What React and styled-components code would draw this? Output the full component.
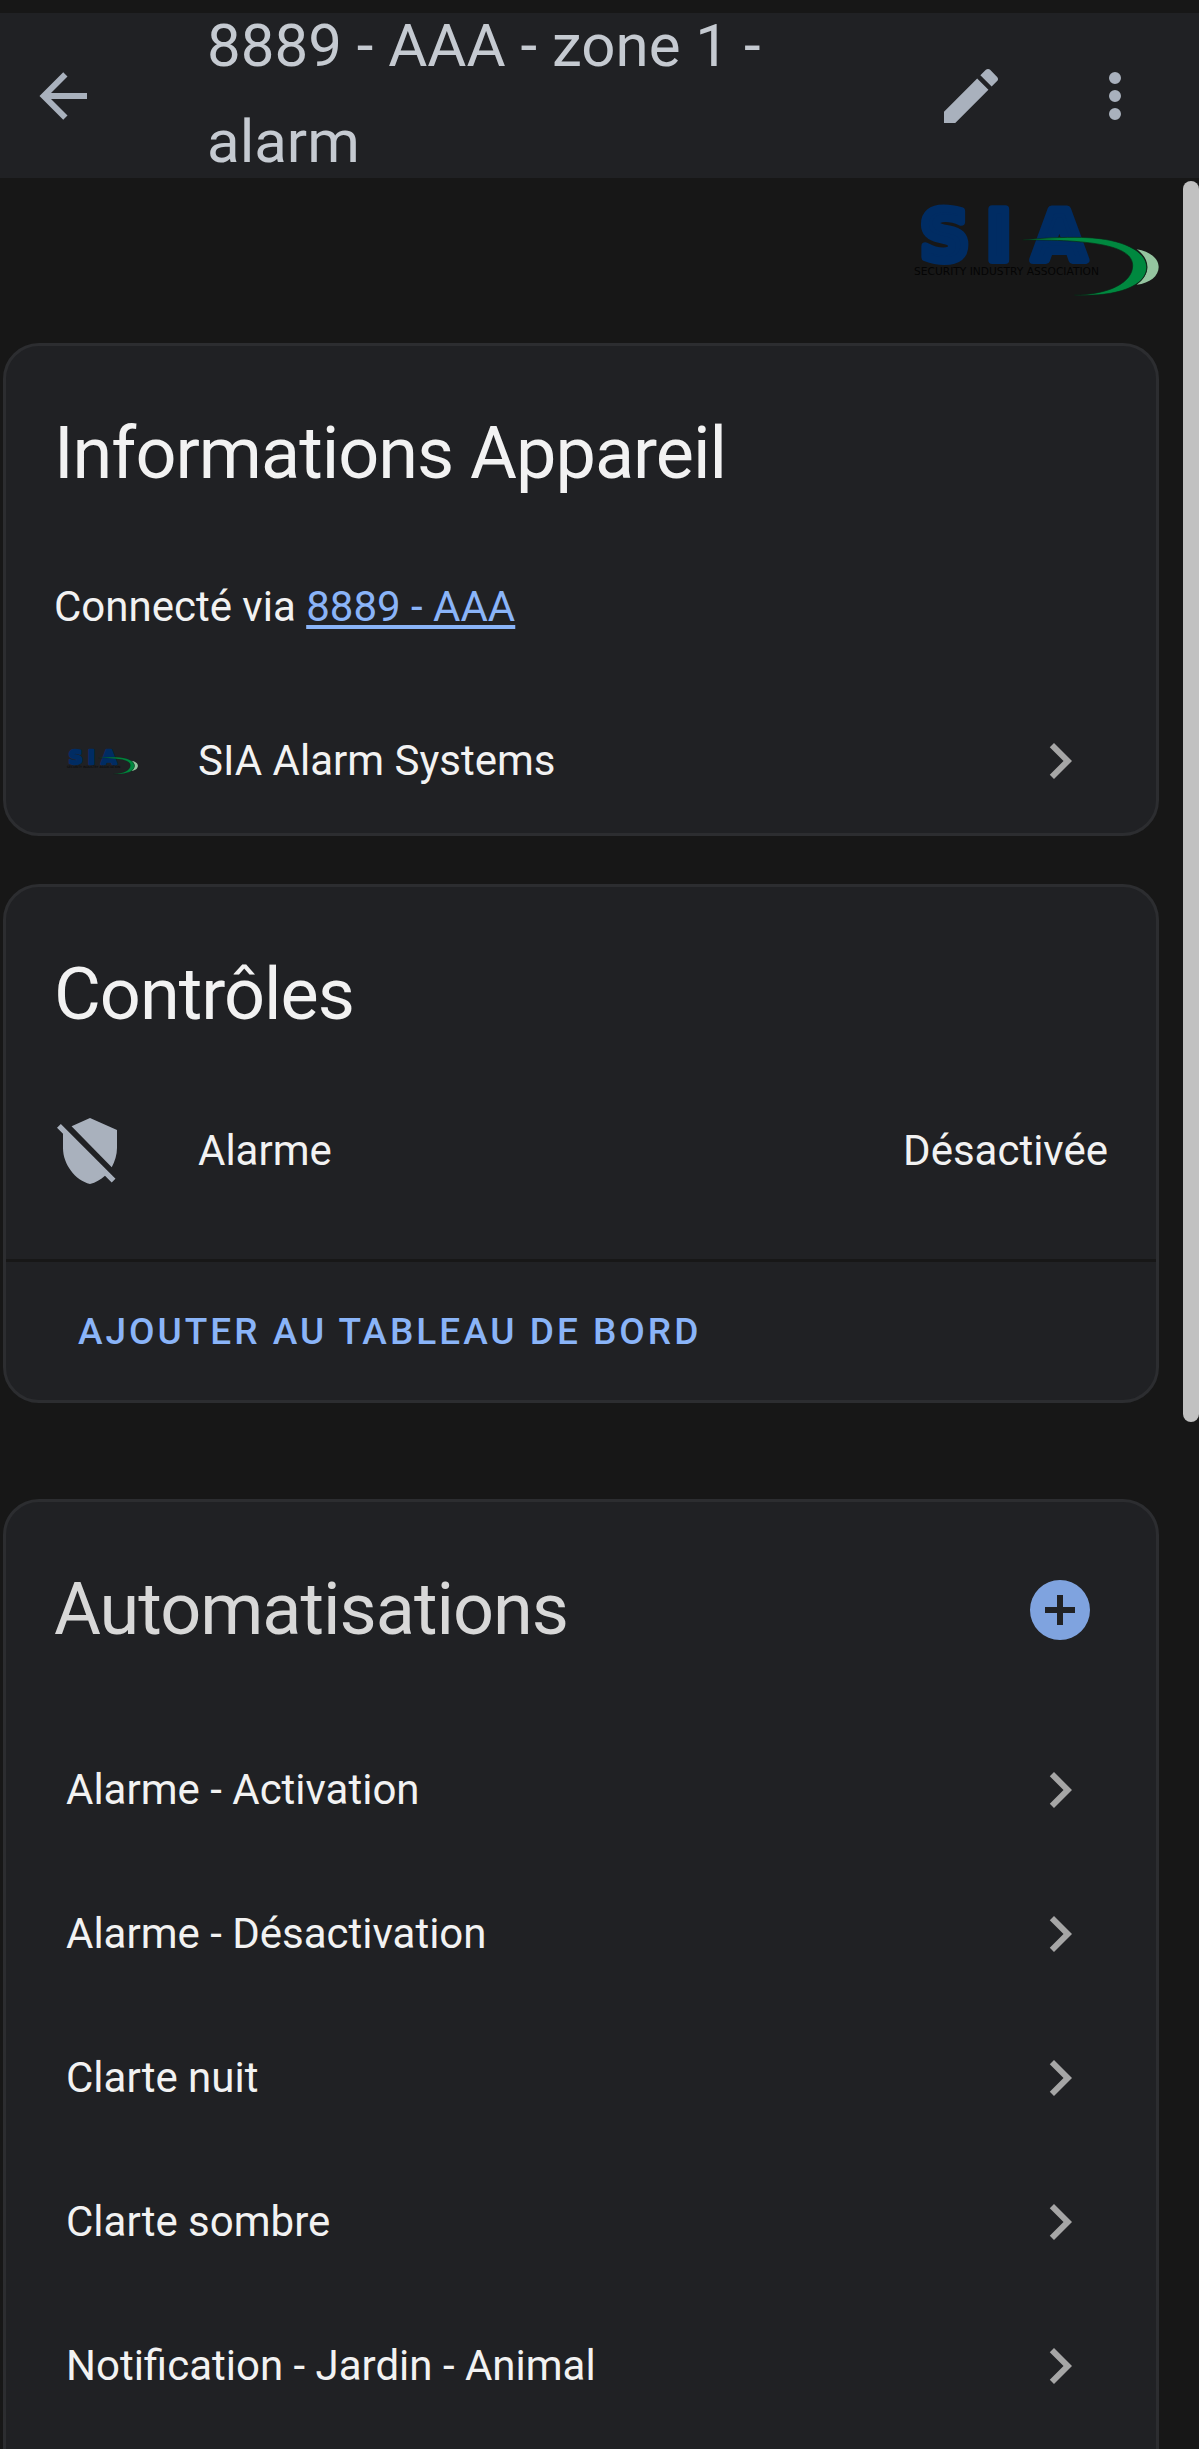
import React from 'react';
import styled, { createGlobalStyle } from 'styled-components';

const GlobalStyle = createGlobalStyle`
  * {
    box-sizing: border-box;
  }
  body {
    margin: 0;
    background-color: #171717;
    color: #f2f2f2;
    font-family: Roboto, 'Liberation Sans', sans-serif;
    font-size: 42px;
    line-height: 66px;
  }
`;

const Page = styled.div`
  display: flex;
  flex-direction: column;
  height: 100vh;
  padding-top: 13px;
  overflow: hidden;
`;
const Toolbar = styled.header`
  display: flex;
  flex: none;
  align-items: center;
  height: 165px;
  padding-right: 12px;
  background-color: #202124;
`;
const Title = styled.div`
  flex: 1;
  margin: 0 84px 0 81px;
  padding-bottom: 4px;
  color: #c5cad1;
  font-size: 60px;
  line-height: 96px;
`;
const IconButton = styled.button`
  display: flex;
  flex: none;
  align-items: center;
  justify-content: center;
  width: ${props => (props.$narrow ? '126px' : '144px')};
  height: 144px;
  padding: 0;
  border: 0;
  background-color: transparent;
  color: ${props => props.$color || '#a9b1bd'};
  cursor: pointer;
`;
const Icon = styled.svg`
  display: block;
  flex: none;
  width: 72px;
  height: 72px;
  fill: currentColor;
`;

const Body = styled.div`
  display: flex;
  flex: 1;
  min-height: 0;
`;
const Content = styled.main`
  flex: 1;
  min-width: 0;
  padding: 0 24px 0 3px;
`;
const Track = styled.div`
  width: 16px;
  padding: 3px 0;
`;
const Thumb = styled.div`
  height: 54.8%;
  border-radius: 8px;
  background-color: #c1c1c1;
`;

const Brand = styled.div`
  display: flex;
  align-items: center;
  justify-content: flex-end;
  height: 165px;
  padding-bottom: 21px;
`;
const Logo = styled.svg`
  display: block;
  flex: none;
  width: ${props => (props.$small ? '72px' : '248px')};
  height: ${props => (props.$small ? '28px' : '91px')};
  overflow: visible;
`;

const Card = styled.section`
  margin-bottom: ${props => (props.$last ? '96px' : '48px')};
  border: 3px solid #2c2d30;
  border-radius: 36px;
  background-color: #202124;
`;
const CardHeader = styled.div`
  display: flex;
  align-items: center;
  justify-content: space-between;
  padding: ${props => (props.$action ? '36px 24px 36px 48px' : '36px 48px 48px')};
`;
const Heading = styled.h1`
  margin: 0;
  color: ${props => (props.$dim ? '#d8d8d8' : 'inherit')};
  font-size: 72px;
  font-weight: 400;
  line-height: 144px;
  letter-spacing: -1px;
`;
const Via = styled.p`
  margin: 0;
  padding: 0 48px 49px;
`;
const Link = styled.a`
  color: #8ab4f8;
  text-decoration-thickness: 4px;
  text-underline-offset: 4px;
`;

const List = styled.ul`
  margin: 0;
  padding: 0 0 144px;
  list-style: none;
`;
const Row = styled.a`
  display: flex;
  align-items: center;
  gap: 60px;
  height: 144px;
  padding: 0 60px;
  color: inherit;
  text-decoration: none;
`;
const Label = styled.span`
  flex: 1;
`;
const Chevron = styled(Icon)`
  color: #a6a6a6;
`;
const Entity = styled.div`
  display: flex;
  align-items: center;
  gap: 72px;
  height: 144px;
  padding: 0 48px 72px;
`;
const StateIcon = styled(Icon)`
  color: #a9b1bd;
`;
const CardActions = styled.div`
  padding: 15px 24px;
  border-top: 3px solid #171717;
`;
const TextButton = styled.button`
  height: 108px;
  padding: 0 48px;
  border: 0;
  background-color: transparent;
  color: #8ab4f8;
  font-family: inherit;
  font-size: 37px;
  font-weight: 500;
  letter-spacing: 3px;
  text-transform: uppercase;
  cursor: pointer;
`;

const icons = {
  back: 'M20,11V13H8L13.5,18.5L12.08,19.92L4.16,12L12.08,4.08L13.5,5.5L8,11H20Z',
  pencil: 'M20.71,7.04C21.1,6.65 21.1,6 20.71,5.63L18.37,3.29C18,2.9 17.35,2.9 16.96,3.29L15.12,5.12L18.87,8.87M3,17.25V21H6.75L17.81,9.93L14.06,6.18L3,17.25Z',
  dots: 'M12,16A2,2 0 0,1 14,18A2,2 0 0,1 12,20A2,2 0 0,1 10,18A2,2 0 0,1 12,16M12,10A2,2 0 0,1 14,12A2,2 0 0,1 12,14A2,2 0 0,1 10,12A2,2 0 0,1 12,10M12,4A2,2 0 0,1 14,6A2,2 0 0,1 12,8A2,2 0 0,1 10,6A2,2 0 0,1 12,4Z',
  chevron: 'M8.59,16.58L13.17,12L8.59,7.41L10,6L16,12L10,18L8.59,16.58Z',
  plus: 'M17,13H13V17H11V13H7V11H11V7H13V11H17M12,2A10,10 0 0,0 2,12A10,10 0 0,0 12,22A10,10 0 0,0 22,12A10,10 0 0,0 12,2Z',
  shieldOff: 'M1,4.27L2.28,3L20.5,21.22L19.23,22.5L17,20.25C15.57,21.57 13.87,22.54 12,23C7.16,21.81 3,16.5 3,11V6.27L1,4.27M12,1L21,5V11C21,13.28 20.27,15.45 19.25,17.38L5.85,3.73L12,1Z',
};

const automations = [
  'Alarme - Activation',
  'Alarme - Désactivation',
  'Clarte nuit',
  'Clarte sombre',
  'Notification - Jardin - Animal',
];

const SiaLogo = ({ small }) => (
  <Logo $small={small} viewBox="95 613 744 273" role="img" aria-label="SIA">
    <g fill="#002c63" stroke="#002c63" strokeWidth="24" strokeLinejoin="round" fontFamily="DejaVu Sans" fontWeight="700" fontSize="206" textAnchor="middle">
      <text x="196" y="778">S</text>
      <text x="358" y="778">I</text>
      <text x="540" y="778">A</text>
    </g>
    <text x="104" y="823" fill="#050505" fontFamily="DejaVu Sans" fontSize="32">SECURITY INDUSTRY ASSOCIATION</text>
    <path fill="#95c5a0" d="M772,746C812,752 838,774 838,799C838,826 812,848 772,852C815,822 815,776 772,746Z" />
    <path fill="#00883f" stroke="#0c2416" strokeWidth="2" d="M430,718C510,710 580,709 625,711C725,715 802,750 802,800C802,855 715,890 585,883C690,882 760,845 760,795C760,745 680,716 430,718Z" />
  </Logo>
);

const Glyph = ({ as: Component = Icon, name }) => (
  <Component viewBox="0 0 24 24" aria-hidden="true">
    <path d={icons[name]} />
  </Component>
);

const App = () => (
  <Page>
    <GlobalStyle />
    <Toolbar>
      <IconButton $narrow aria-label="Retour"><Glyph name="back" /></IconButton>
      <Title>8889 - AAA - zone 1 - alarm</Title>
      <IconButton aria-label="Modifier"><Glyph name="pencil" /></IconButton>
      <IconButton aria-label="Menu"><Glyph name="dots" /></IconButton>
    </Toolbar>
    <Body>
      <Content>
        <Brand><SiaLogo /></Brand>
        <Card>
          <CardHeader><Heading>Informations Appareil</Heading></CardHeader>
          <Via>Connecté via <Link href="#hub">8889 - AAA</Link></Via>
          <Row href="#integration">
            <SiaLogo small />
            <Label>SIA Alarm Systems</Label>
            <Glyph as={Chevron} name="chevron" />
          </Row>
        </Card>
        <Card $last>
          <CardHeader><Heading>Contrôles</Heading></CardHeader>
          <Entity>
            <Glyph as={StateIcon} name="shieldOff" />
            <Label>Alarme</Label>
            <span>Désactivée</span>
          </Entity>
          <CardActions>
            <TextButton>Ajouter au tableau de bord</TextButton>
          </CardActions>
        </Card>
        <Card>
          <CardHeader $action>
            <Heading $dim>Automatisations</Heading>
            <IconButton $color="#7fa3df" aria-label="Ajouter"><Glyph name="plus" /></IconButton>
          </CardHeader>
          <List>
            {automations.map(name => (
              <li key={name}>
                <Row href="#automation">
                  <Label>{name}</Label>
                  <Glyph as={Chevron} name="chevron" />
                </Row>
              </li>
            ))}
          </List>
        </Card>
      </Content>
      <Track aria-hidden="true"><Thumb /></Track>
    </Body>
  </Page>
);

export default App;
